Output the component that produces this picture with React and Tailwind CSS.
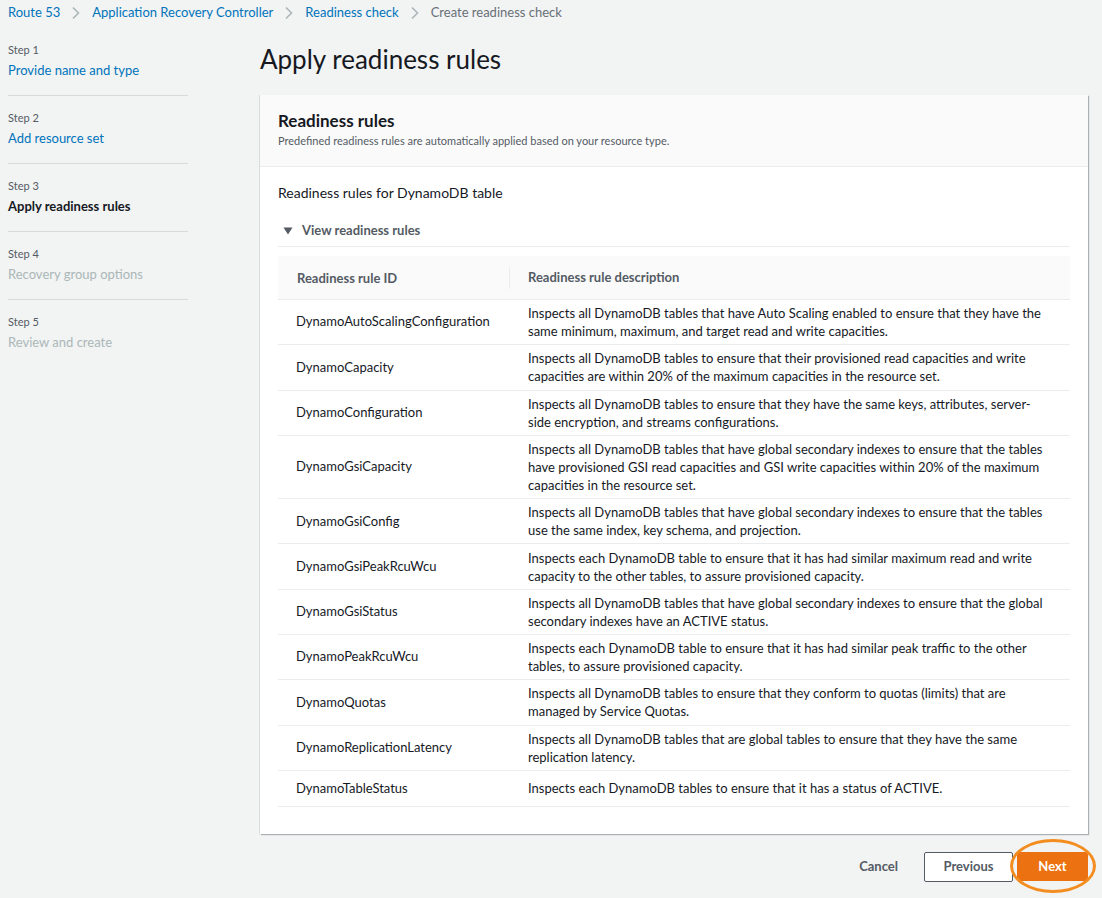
import React from 'react';

const crumbs = ['Route 53', 'Application Recovery Controller', 'Readiness check'];

const steps = [
    { n: 1, title: 'Provide name and type', state: 'done' },
    { n: 2, title: 'Add resource set', state: 'done' },
    { n: 3, title: 'Apply readiness rules', state: 'current' },
    { n: 4, title: 'Recovery group options', state: 'todo' },
    { n: 5, title: 'Review and create', state: 'todo' },
];

const rules = [
    ['DynamoAutoScalingConfiguration', ['Inspects all DynamoDB tables that have Auto Scaling enabled to ensure that they have the', 'same minimum, maximum, and target read and write capacities.']],
    ['DynamoCapacity', ['Inspects all DynamoDB tables to ensure that their provisioned read capacities and write', 'capacities are within 20% of the maximum capacities in the resource set.']],
    ['DynamoConfiguration', ['Inspects all DynamoDB tables to ensure that they have the same keys, attributes, server-', 'side encryption, and streams configurations.']],
    ['DynamoGsiCapacity', ['Inspects all DynamoDB tables that have global secondary indexes to ensure that the tables', 'have provisioned GSI read capacities and GSI write capacities within 20% of the maximum', 'capacities in the resource set.']],
    ['DynamoGsiConfig', ['Inspects all DynamoDB tables that have global secondary indexes to ensure that the tables', 'use the same index, key schema, and projection.']],
    ['DynamoGsiPeakRcuWcu', ['Inspects each DynamoDB table to ensure that it has had similar maximum read and write', 'capacity to the other tables, to assure provisioned capacity.']],
    ['DynamoGsiStatus', ['Inspects all DynamoDB tables that have global secondary indexes to ensure that the global', 'secondary indexes have an ACTIVE status.']],
    ['DynamoPeakRcuWcu', ['Inspects each DynamoDB table to ensure that it has had similar peak traffic to the other', 'tables, to assure provisioned capacity.']],
    ['DynamoQuotas', ['Inspects all DynamoDB tables to ensure that they conform to quotas (limits) that are', 'managed by Service Quotas.']],
    ['DynamoReplicationLatency', ['Inspects all DynamoDB tables that are global tables to ensure that they have the same', 'replication latency.']],
    ['DynamoTableStatus', ['Inspects each DynamoDB tables to ensure that it has a status of ACTIVE.']],
];

const Chevron = () => (
    <svg width="10" height="14" viewBox="0 0 10 14" className="mx-[11px]">
        <path d="M2 1.5 L7.5 7 L2 12.5" fill="none" stroke="#aab7b8" strokeWidth="1.6" />
    </svg>
);

const App = () => {
    return (
        <div className="min-h-[898px] bg-[#f2f3f3] text-[#16191f] text-[13px]" style={{ fontFamily: 'Lato, "Liberation Sans", sans-serif' }}>
            {/* Breadcrumbs */}
            <div className="flex items-center h-[25px] pl-[8px]">
                {crumbs.map((c) => (
                    <React.Fragment key={c}>
                        <span className="text-[#0073bb]">{c}</span>
                        <Chevron />
                    </React.Fragment>
                ))}
                <span className="text-[#687078]">Create readiness check</span>
            </div>

            <div className="flex pl-[8px] pr-[14px]">
                {/* Wizard steps */}
                <div className="w-[180px] shrink-0 pt-[3px]">
                    {steps.map((s, i) => (
                        <div key={s.n} className={`pt-[13px] ${i < steps.length - 1 ? 'pb-[14px] border-b border-[#d5dbdb]' : ''}`}>
                            <div className="text-[11px] leading-[18px] text-[#545b64]">Step {s.n}</div>
                            <div
                                className={
                                    s.state === 'current'
                                        ? 'leading-[22px] font-bold text-[#16191f]'
                                        : s.state === 'done'
                                        ? 'leading-[22px] text-[#0073bb]'
                                        : 'leading-[22px] text-[#aab7b8]'
                                }
                            >
                                {s.title}
                            </div>
                        </div>
                    ))}
                </div>

                {/* Main content */}
                <div className="flex-1 min-w-0 ml-[72px]">
                    <h1 className="text-[26px] leading-[30px] pt-[19px] pb-[21px] text-[#16191f]">Apply readiness rules</h1>

                    <div className="bg-white shadow-[1px_1px_1px_0_rgba(0,28,36,0.3),-1px_0_0_0_rgba(0,28,36,0.1)]">
                        <div className="bg-[#fafafa] border-b border-[#eaeded] px-[18px] pt-[15px] pb-[17px]">
                            <h2 className="text-[17px] leading-[22px] font-bold">Readiness rules</h2>
                            <p className="text-[11px] leading-[16px] text-[#545b64] mt-[1px]">Predefined readiness rules are automatically applied based on your resource type.</p>
                        </div>

                        <div className="px-[18px] pt-[15px] pb-[27px]">
                            <div className="leading-[22px] text-[14px]">Readiness rules for DynamoDB table</div>

                            <div className="flex items-center h-[22px] mt-[16px] mb-[4px] font-bold text-[#545b64]">
                                <svg width="10" height="10" viewBox="0 0 10 10" className="ml-[5px] mr-[9px]">
                                    <path d="M0.5 1.5 H9.5 L5 8.5 Z" fill="#545b64" />
                                </svg>
                                View readiness rules
                            </div>

                            <div className="border-t border-[#eaeded] pt-[9px]">
                                <div className="flex items-center h-[44px] bg-[#fafafa] border-b border-[#eaeded] font-bold text-[#545b64]">
                                    <div className="w-[232px] pl-[19px] border-r border-[#eaeded] leading-[22px]">Readiness rule ID</div>
                                    <div className="pl-[18px]">Readiness rule description</div>
                                </div>
                                {rules.map(([id, lines], i) => (
                                    <div
                                        key={id}
                                        className={`flex items-center border-b border-[#eaeded] py-[4.15px] ${i === rules.length - 1 ? 'min-h-[36px]' : ''}`}
                                    >
                                        <div className="w-[232px] pl-[18px] shrink-0">{id}</div>
                                        <div className="pl-[18px] leading-[18px] min-w-0">
                                            {lines.map((l, j) => (
                                                <div key={j} className="whitespace-nowrap">{l}</div>
                                            ))}
                                        </div>
                                    </div>
                                ))}
                            </div>
                        </div>
                    </div>

                    {/* Actions */}
                    <div className="flex items-center justify-end mt-[18px] font-bold">
                        <button className="text-[#545b64] px-[20px] h-[30px]">Cancel</button>
                        <button className="ml-[6px] h-[30px] w-[89px] border border-[#545b64] bg-white text-[#545b64] rounded-[2px]">Previous</button>
                        <div className="relative ml-[4px]">
                            <button className="h-[29px] w-[71px] bg-[#ec7211] text-white rounded-[2px]">Next</button>
                            <div className="absolute left-[-7px] right-[-8px] top-[-13px] bottom-[-12px] rounded-[50%] border-[3px] border-[#f38d1f] pointer-events-none" />
                        </div>
                    </div>
                </div>
            </div>
        </div>
    );
};

export default App;
